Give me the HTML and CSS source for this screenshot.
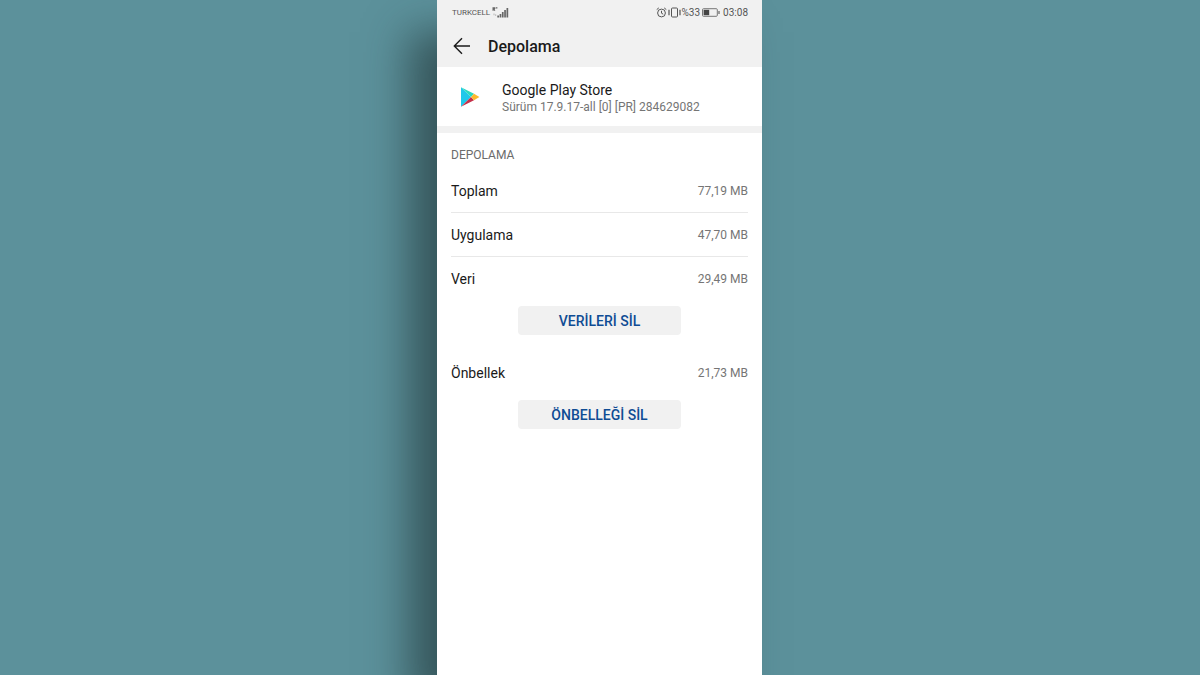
FILE: index.html
```html
<!DOCTYPE html>
<html lang="tr">
<head>
  <meta charset="UTF-8">
  <meta name="viewport" content="width=device-width, initial-scale=1.0">
  <title>Depolama</title>
  <link rel="stylesheet" href="styles.css">
</head>
<body>

  <div class="phone">
    <header class="top">
      <!-- Status bar -->
      <div class="status">
        <div class="status-left">
          <span class="carrier">TURKCELL</span>
          <svg class="signal" width="17" height="11" viewBox="0 0 17 11" fill="#666">
            <path d="M0.5 0.3h2.8v1.6h-.6l.6 1.8H2.1L1.7 2.4v1.3H.5zM3.9 .3h1.5v1.3H3.9z"/>
            <path d="M1.5 6.5h1v1.8h-1zM3.2 7.2h1V9h-1z" opacity=".4"/>
            <path d="M5.3 8.5h1.7v2H5.3zM7.6 7h1.7v3.5H7.6zM9.9 5h1.7v5.5H9.9zM12.2 3h1.7v7.5h-1.7zM14.5 1h1.7v9.5h-1.7z"/>
          </svg>
        </div>
        <div class="status-right">
          <svg width="11" height="11" viewBox="0 0 11 11" fill="none" stroke="#555">
            <circle cx="5.5" cy="6" r="3.9"/>
            <path d="M5.5 3.8v2.4l1.7 1M.7 2.6 2.8.9M10.3 2.6 8.2.9"/>
          </svg>
          <svg width="13" height="11" viewBox="0 0 13 11" fill="none" stroke="#555">
            <rect x="3.5" y="1" width="6" height="9" rx="1"/>
            <path d="M1 2.8v5.4M12 2.8v5.4" stroke-width="1.2"/>
          </svg>
          <span>%33</span>
          <svg class="battery" width="18" height="9" viewBox="0 0 18 9" fill="none" stroke="#777">
            <rect x=".5" y=".7" width="14.8" height="7.6" rx="1"/>
            <path d="M1.6 1.8h5.6v5.4H1.6z" fill="#444" stroke="none"/>
            <path d="M17 3v3" stroke-width="1.4"/>
          </svg>
          <span>03:08</span>
        </div>
      </div>
      <!-- Title bar -->
      <div class="title-bar">
        <button class="back" type="button" aria-label="Geri">
          <svg width="18" height="18" viewBox="0 0 18 18" fill="none" stroke="#1a1a1a" stroke-width="1.4">
            <path d="M17 9H1.5M9 1.2 1.3 9 9 16.8"/>
          </svg>
        </button>
        <h1>Depolama</h1>
      </div>
    </header>

    <section class="app">
      <svg class="app-icon" width="20" height="22" viewBox="0 0 20 22">
        <path d="M1 1.2v19.6L11 11z" fill="#1fc8ea"/>
        <path d="M1 1.2 14 7.8 11 11z" fill="#2bd9c0"/>
        <path d="M1 20.8 14 14.2 11 11z" fill="#c5304a"/>
        <path d="M14 7.8 19.4 11 14 14.2 11 11z" fill="#fbb92c"/>
      </svg>
      <div class="app-info">
        <p class="app-name">Google Play Store</p>
        <p class="app-version">Sürüm 17.9.17-all [0] [PR] 284629082</p>
      </div>
    </section>

    <main class="storage">
      <h2>DEPOLAMA</h2>
      <div class="row line"><span>Toplam</span><span class="size">77,19 MB</span></div>
      <div class="row line"><span>Uygulama</span><span class="size">47,70 MB</span></div>
      <div class="row"><span>Veri</span><span class="size">29,49 MB</span></div>
      <button class="clear" type="button">VERİLERİ SİL</button>
      <div class="row"><span>Önbellek</span><span class="size">21,73 MB</span></div>
      <button class="clear" type="button">ÖNBELLEĞİ SİL</button>
    </main>
  </div>

</body>
</html>
```
FILE: styles.css
```css
* { box-sizing: border-box; }
body { margin: 0; padding-right: 1px; background: #5c919b; font-family: Roboto, Arial, sans-serif; color: #1a1a1a; overflow: hidden; }
h1, h2, p { margin: 0; }
svg { display: block; flex: none; }

.phone { width: 100%; max-width: 325px; min-height: 100vh; margin: 0 auto; background: #fff; box-shadow: -28px 32px 40px rgba(30, 50, 52, 0.62); }

.top { background: #f1f1f1; height: 67px; }
.status { display: flex; justify-content: space-between; height: 25px; padding: 0 14px 0 15px; font-size: 10px; color: #555; }
.status-left, .status-right { display: flex; align-items: center; }
.status-left { gap: 2px; }
.status-right { gap: 1px; }
.carrier { font-size: 8px; }
.battery { margin: 0 2px 0 1px; }

.title-bar { display: flex; align-items: center; height: 42px; padding: 0 16px; }
.back { padding: 0; margin-right: 17px; border: none; background: none; cursor: pointer; }
h1 { padding-top: 2px; font-size: 16px; font-weight: 500; line-height: 22px; }

.app { display: flex; align-items: center; height: 66px; padding: 0 23px; border-bottom: 7px solid #f1f1f1; }
.app-icon { margin-right: 22px; }
.app-info { padding-top: 2px; }
.app-name { font-size: 14px; line-height: 18px; }
.app-version { font-size: 12px; line-height: 16px; color: #757575; }

.storage { padding: 14px 14px 0; }
h2 { height: 22px; font-size: 12px; font-weight: 400; line-height: 16px; color: #6b6b6b; }
.row { display: flex; align-items: center; justify-content: space-between; height: 44px; font-size: 14px; }
.line { border-bottom: 1px solid #e8e8e8; }
.size { font-size: 12px; color: #757575; }
.clear { display: block; width: 55%; height: 29px; margin: 5px auto 16px; padding: 0; border: none; border-radius: 4px; background: #f1f1f1; color: #0f4c94; font-family: inherit; font-size: 14px; font-weight: 500; cursor: pointer; }
```
